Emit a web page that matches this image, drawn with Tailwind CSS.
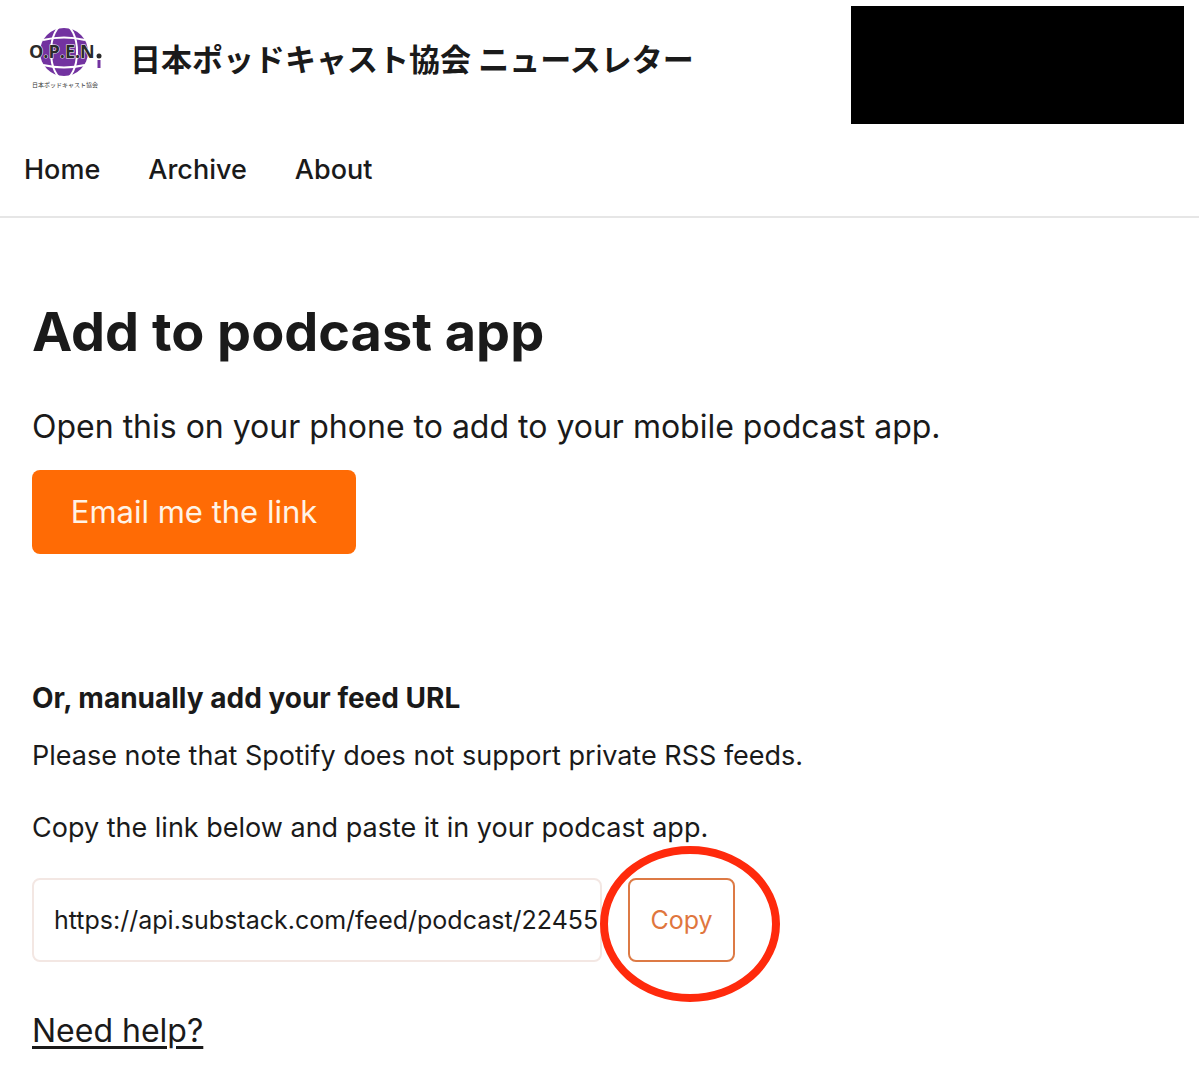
<!DOCTYPE html>
<html lang="ja">
<head>
  <meta charset="UTF-8">
  <meta name="viewport" content="width=device-width, initial-scale=1.0">
  <title>日本ポッドキャスト協会 ニュースレター</title>
  <script src="https://cdn.jsdelivr.net/npm/@tailwindcss/browser@4"></script>
</head>
<body class="bg-white text-[#1a1a1a] font-['Inter','Noto_Sans_CJK_JP',sans-serif]">

<header class="border-b-2 border-[#e6e6e6]">
  <div class="flex items-start justify-between pl-6 pr-[15px] pt-[6px]">
    <a href="/" class="flex items-center gap-[26px] pt-[14px]">
      <svg class="w-20 h-20 shrink-0" viewBox="0 0 80 80" role="img" aria-label="O.P.E.N.">
        <circle cx="40" cy="32" r="24" fill="#7232a0"/>
        <g fill="none" stroke="#fff" stroke-width="2">
          <ellipse cx="40" cy="32" rx="13" ry="27"/>
          <path d="M19 20q21 -5 42 0M19 45q21 5 42 0"/>
        </g>
        <text x="5" y="38" font-family="Open Sans, sans-serif" font-size="18" font-weight="700" fill="#2b2b2b" stroke="#fff" stroke-width="1" paint-order="stroke">O.P.E.N</text>
        <path d="M75 40v8" stroke="#7232a0" stroke-width="3"/>
        <circle cx="75" cy="36" r="2.500" fill="#2b2b2b"/>
        <text x="8" y="67" font-family="Noto Sans CJK JP, sans-serif" font-size="6" font-weight="400" fill="#333">日本ポッドキャスト協会</text>
      </svg>
      <h1 class="text-[31px] leading-10 font-bold">日本ポッドキャスト協会 ニュースレター</h1>
    </a>
    <!-- account area -->
    <div class="w-[333px] h-[118px] bg-black"></div>
  </div>
  <nav class="flex gap-12 px-6 pt-[26px] pb-[26px] text-[27px] leading-10 font-medium">
    <a href="/">Home</a>
    <a href="/archive">Archive</a>
    <a href="/about">About</a>
  </nav>
</header>

<main class="px-8 pt-20 pb-8">
  <h2 class="text-[54px] leading-[68px] font-bold">Add to podcast app</h2>
  <p class="mt-8 text-[32px] leading-[58px]">Open this on your phone to add to your mobile podcast app.</p>
  <button type="button" class="mt-[14px] w-[324px] h-[84px] rounded-lg bg-[#ff6b05] text-[31px] leading-10 text-[#fff3e6]">Email me the link</button>

  <h3 class="mt-[124px] text-[28px] leading-10 font-bold">Or, manually add your feed URL</h3>
  <p class="mt-4 text-[27px] leading-[44px]">Please note that Spotify does not support private RSS feeds.</p>
  <p class="mt-7 text-[27px] leading-[44px]"><label for="feed-url">Copy the link below and paste it in your podcast app.</label></p>

  <div class="mt-7 flex items-center gap-[26px]">
    <input type="text" id="feed-url" readonly value="https://api.substack.com/feed/podcast/22455"
           class="w-[570px] h-[84px] pl-5 rounded-lg border-2 border-[#f3e7e3] text-[25px] leading-10 outline-none">
    <div class="relative">
      <button type="button" class="w-[107px] h-[84px] rounded-lg border-2 border-[#dd7a45] text-[25px] leading-10 text-[#e0763e]">Copy</button>
      <!-- highlight ring round the copy button -->
      <div class="absolute -left-7 -top-8 w-[180px] h-[156px] rounded-[50%] border-8 border-[#ff2a0c] pointer-events-none"></div>
    </div>
  </div>

  <p class="mt-10 text-[32px] leading-[58px]"><a href="/help" class="underline decoration-3 underline-offset-4">Need help?</a></p>
</main>

</body>
</html>
